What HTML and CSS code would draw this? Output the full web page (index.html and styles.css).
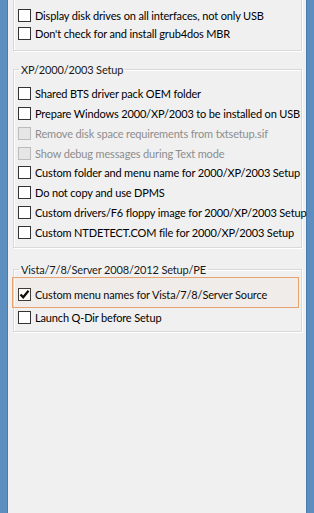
FILE: index.html
```html
<!DOCTYPE html>
<html>
<head>
<meta charset="utf-8">
<link rel="stylesheet" href="styles.css">
</head>
<body>
<div class="window">
  <div class="edge edge-left"></div>
  <div class="content">
    <fieldset class="group group-first">
      <div class="row short"><span class="box"></span><span class="label">Display disk drives on all interfaces, not only USB</span></div>
      <div class="row short"><span class="box"></span><span class="label">Don't check for and install grub4dos MBR</span></div>
    </fieldset>

    <fieldset class="group group-xp">
      <legend>XP/2000/2003 Setup</legend>
      <div class="row mid"><span class="box"></span><span class="label">Shared BTS driver pack OEM folder</span></div>
      <div class="row mid"><span class="box"></span><span class="label">Prepare Windows 2000/XP/2003 to be installed on USB</span></div>
      <div class="row mid disabled"><span class="box"></span><span class="label">Remove disk space requirements from txtsetup.sif</span></div>
      <div class="row mid disabled"><span class="box"></span><span class="label">Show debug messages during Text mode</span></div>
      <div class="row mid"><span class="box"></span><span class="label">Custom folder and menu name for 2000/XP/2003 Setup</span></div>
      <div class="row mid"><span class="box"></span><span class="label">Do not copy and use DPMS</span></div>
      <div class="row mid"><span class="box"></span><span class="label">Custom drivers/F6 floppy image for 2000/XP/2003 Setup</span></div>
      <div class="row mid"><span class="box"></span><span class="label">Custom NTDETECT.COM file for 2000/XP/2003 Setup</span></div>
    </fieldset>

    <fieldset class="group group-vista">
      <legend>Vista/7/8/Server 2008/2012 Setup/PE</legend>
      <div class="row highlighted">
        <span class="highlight"></span>
        <span class="box checked"><svg width="11" height="11" viewBox="0 0 11 11"><path d="M1.5 5.5 L4.2 8.3 L9.5 1.8" fill="none" stroke="#000" stroke-width="2.2"/></svg></span>
        <span class="label">Custom menu names for Vista/7/8/Server Source</span>
      </div>
      <div class="row second"><span class="box"></span><span class="label">Launch Q-Dir before Setup</span></div>
    </fieldset>
  </div>
  <div class="edge edge-right"></div>
</div>
</body>
</html>
```

FILE: styles.css
```css
* { box-sizing: border-box; }

html, body {
  margin: 0;
  padding: 0;
  width: 314px;
  height: 513px;
  overflow: hidden;
}

body {
  font-family: "Lato", "Liberation Sans", sans-serif;
  font-size: 11px;
  letter-spacing: -0.15px;
  color: #000;
  background: #f0f0f0;
}

.window {
  display: flex;
  height: 513px;
}

.edge {
  width: 8px;
  flex: none;
  background: #5c8ebf;
}
.edge-left { border-right: 1px solid #4b7cad; }
.edge-right { border-left: 1px solid #4b7cad; }

.content {
  flex: 1;
  background: #f0f0f0;
  min-width: 0;
}

.group {
  margin: 0 4px 0 5px;
  padding: 0;
  border: 1px solid #d9d9d9;
  box-shadow: inset 1px 1px 0 #fff, 1px 1px 0 #fff;
  min-width: 0;
}

.group legend {
  margin-left: 5px;
  padding: 0 2px;
  line-height: 15px;
  font-size: 11px;
  color: #1a1a1a;
}

.group-first {
  margin-top: -10px;
  padding-top: 15px;
  padding-bottom: 8px;
}

.group-xp {
  margin-top: 11px;
  padding-top: 7px;
  padding-bottom: 5px;
}

.group-vista {
  margin-top: 14px;
  padding-top: 7px;
  padding-bottom: 4px;
}

.row {
  position: relative;
  display: flex;
  align-items: center;
  padding-left: 4px;
  height: 20px;
  white-space: nowrap;
}
.row.short { height: 18px; }
.row.mid { height: 19.75px; }
.row.second { margin-top: 3px; }

.box {
  flex: none;
  width: 13px;
  height: 13px;
  border: 1px solid #333;
  background: #fff;
  display: flex;
  align-items: center;
  justify-content: center;
}

.label {
  margin-left: 4px;
  line-height: 15px;
}

.disabled .box {
  border-color: #bcbcbc;
  background: #e6e6e6;
}
.disabled .label { color: #8d8d8d; }

.highlight {
  position: absolute;
  left: -2px;
  right: 2px;
  top: -7px;
  bottom: -4px;
  border: 1px solid #e7a270;
  background: rgba(255, 190, 140, 0.06);
  pointer-events: none;
}
```
